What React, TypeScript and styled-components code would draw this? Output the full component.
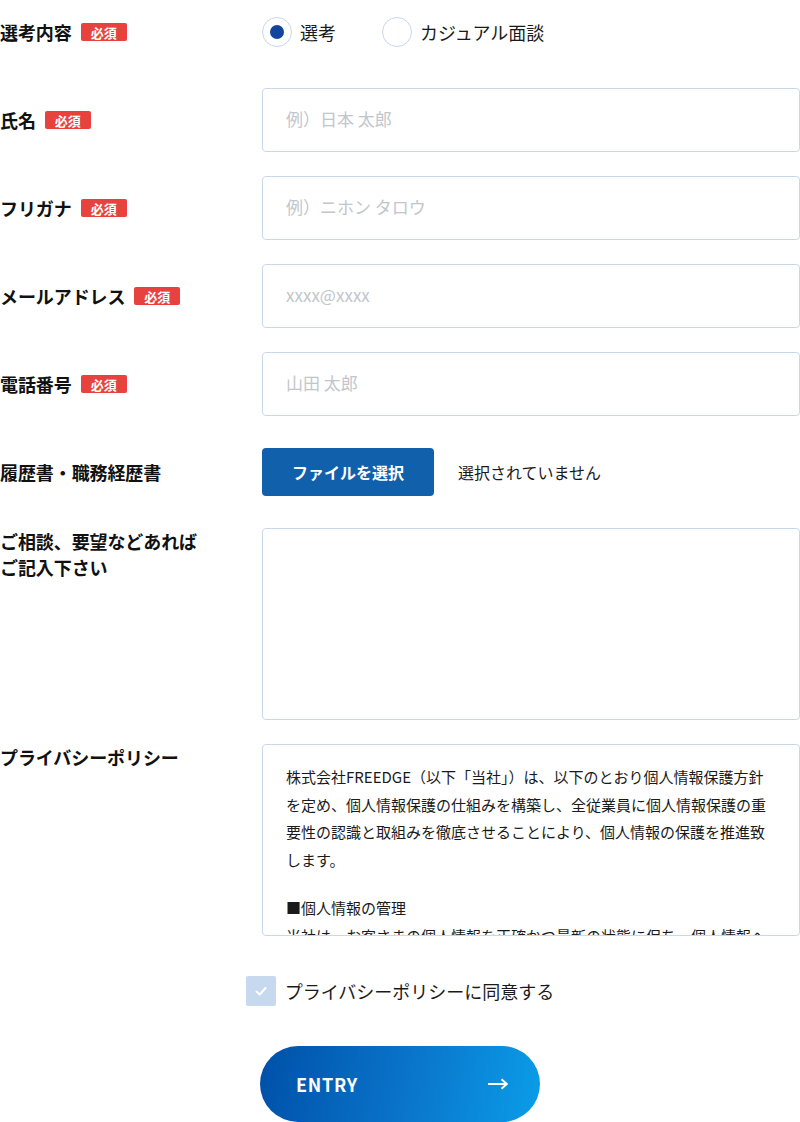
import { createGlobalStyle, styled } from "styled-components";

const GlobalStyle = createGlobalStyle`
  * { box-sizing: border-box; }
  body {
    margin: 0;
    background: #fff;
    color: #111;
    font-family: "Noto Sans CJK JP", "Noto Sans", sans-serif;
  }
`;

const Form = styled.form`
  width: 800px;
  display: flex;
  flex-direction: column;
`;

const Rows = styled.div`
  display: flex;
  flex-direction: column;
  gap: 24px;
`;

const Row = styled.div<{ $top?: boolean }>`
  display: flex;
  align-items: ${(p) => (p.$top ? "flex-start" : "center")};
  min-height: 64px;
`;

const Label = styled.div`
  width: 262px;
  flex-shrink: 0;
  display: flex;
  align-items: center;
  gap: 9px;
  font-size: 18px;
  font-weight: 700;
  line-height: 26px;
  letter-spacing: -0.005em;
`;

const Badge = styled.span`
  display: inline-flex;
  align-items: center;
  justify-content: center;
  width: 46px;
  height: 18px;
  border-radius: 2px;
  background: #e8423f;
  color: #fff;
  font-size: 13px;
  font-weight: 700;
  line-height: 1;
  letter-spacing: 0;
`;

const Field = styled.div`
  flex: 1;
  display: flex;
  align-items: center;
`;

const RadioGroup = styled.div`
  display: flex;
  align-items: center;
  gap: 46px;
`;

const RadioItem = styled.label`
  display: flex;
  align-items: center;
  gap: 8px;
  font-size: 18px;
  color: #1a1a1a;
`;

const RadioCircle = styled.span<{ $checked?: boolean }>`
  width: 30px;
  height: 30px;
  border-radius: 50%;
  border: 1px solid #c6d7ee;
  background: #fff;
  display: flex;
  align-items: center;
  justify-content: center;
  &::after {
    content: "";
    width: 14px;
    height: 14px;
    border-radius: 50%;
    background: ${(p) => (p.$checked ? "#12469e" : "transparent")};
  }
`;

const Input = styled.input`
  width: 100%;
  height: 64px;
  border: 1px solid #c8d7ea;
  border-radius: 4px;
  padding: 0 23px 3px;
  font-family: inherit;
  font-size: 17px;
  color: #222;
  outline: none;
  &::placeholder {
    color: #c2c6cc;
  }
`;

const FileButton = styled.button`
  width: 172px;
  height: 48px;
  border: none;
  border-radius: 4px;
  background: #1060ab;
  color: #fff;
  font-family: inherit;
  font-size: 16px;
  font-weight: 700;
`;

const FileNote = styled.span`
  margin-left: 24px;
  font-size: 16px;
  color: #1a1a1a;
`;

const TextArea = styled.textarea`
  width: 100%;
  height: 192px;
  border: 1px solid #c8d7ea;
  border-radius: 4px;
  resize: none;
  outline: none;
`;

const PolicyBox = styled.div`
  width: 100%;
  height: 192px;
  border: 1px solid #c8d7ea;
  border-radius: 4px;
  padding: 18px 23px;
  overflow: hidden;
  font-size: 15px;
  line-height: 27.5px;
  color: #1a1a1a;
  p {
    margin: 0 0 21px;
  }
`;

const Agree = styled.label`
  margin-top: 40px;
  display: flex;
  align-items: center;
  justify-content: center;
  gap: 9px;
  font-size: 18px;
  line-height: 30px;
  color: #1a1a1a;
`;

const CheckBox = styled.span`
  width: 30px;
  height: 30px;
  border-radius: 2px;
  background: #c7d9ef;
  display: flex;
  align-items: center;
  justify-content: center;
`;

const EntryButton = styled.button`
  margin: 40px auto 0;
  width: 280px;
  height: 76px;
  border: none;
  border-radius: 38px;
  background: linear-gradient(100deg, #0050a8 0%, #0a76cc 55%, #0a9de8 100%);
  color: #fff;
  display: flex;
  align-items: center;
  justify-content: space-between;
  padding: 0 32px 0 36px;
  font-family: inherit;
  font-size: 18px;
  font-weight: 700;
  letter-spacing: 0.04em;
`;

const required = (text: string) => (
  <Label>
    {text}
    <Badge>必須</Badge>
  </Label>
);

export default function App() {
  return (
    <>
      <GlobalStyle />
      <Form>
        <Rows>
          <Row>
            {required("選考内容")}
            <Field>
              <RadioGroup>
                <RadioItem>
                  <RadioCircle $checked />
                  選考
                </RadioItem>
                <RadioItem>
                  <RadioCircle />
                  カジュアル面談
                </RadioItem>
              </RadioGroup>
            </Field>
          </Row>
          <Row>
            {required("氏名")}
            <Field>
              <Input placeholder="例）日本 太郎" />
            </Field>
          </Row>
          <Row>
            {required("フリガナ")}
            <Field>
              <Input placeholder="例）ニホン タロウ" />
            </Field>
          </Row>
          <Row>
            {required("メールアドレス")}
            <Field>
              <Input placeholder="xxxx@xxxx" />
            </Field>
          </Row>
          <Row>
            {required("電話番号")}
            <Field>
              <Input placeholder="山田 太郎" />
            </Field>
          </Row>
          <Row>
            <Label>履歴書・職務経歴書</Label>
            <Field>
              <FileButton type="button">ファイルを選択</FileButton>
              <FileNote>選択されていません</FileNote>
            </Field>
          </Row>
          <Row $top>
            <Label>
              ご相談、要望などあれば
              <br />
              ご記入下さい
            </Label>
            <Field>
              <TextArea />
            </Field>
          </Row>
          <Row $top>
            <Label>プライバシーポリシー</Label>
            <Field>
              <PolicyBox>
                <p>
                  株式会社FREEDGE（以下「当社」）は、以下のとおり個人情報保護方針を定め、個人情報保護の仕組みを構築し、全従業員に個人情報保護の重要性の認識と取組みを徹底させることにより、個人情報の保護を推進致します。
                </p>
                <p>
                  ■個人情報の管理
                  <br />
                  当社は、お客さまの個人情報を正確かつ最新の状態に保ち、個人情報への不正アクセス等を防止します。
                </p>
              </PolicyBox>
            </Field>
          </Row>
        </Rows>
        <Agree>
          <CheckBox>
            <svg width="14" height="14" viewBox="0 0 14 14">
              <polyline
                points="2.5,7.5 5.8,10.5 11.5,4"
                fill="none"
                stroke="#fff"
                strokeWidth="2"
                strokeLinecap="round"
                strokeLinejoin="round"
              />
            </svg>
          </CheckBox>
          <span>プライバシーポリシーに同意する</span>
        </Agree>
        <EntryButton type="button">
          ENTRY
          <svg width="20" height="12" viewBox="0 0 20 12">
            <path d="M0 6H18.5M13.5 1.2L18.8 6L13.5 10.8" fill="none" stroke="#fff" strokeWidth="2" />
          </svg>
        </EntryButton>
      </Form>
    </>
  );
}
